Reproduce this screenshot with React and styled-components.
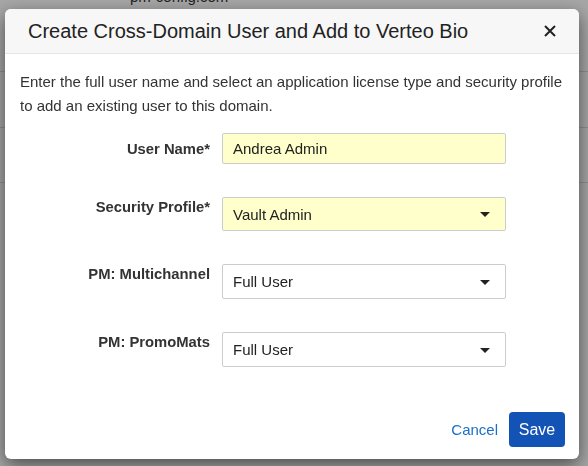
import React from "react";
import styled, { createGlobalStyle } from "styled-components";

const GlobalStyle = createGlobalStyle`
  html, body {
    margin: 0;
    padding: 0;
    width: 100%;
    height: 100%;
    overflow: hidden;
    font-family: "Liberation Sans", Arial, sans-serif;
    color: #333;
  }
`;

const Page = styled.div`
  background: #fff;
  width: 588px;
  height: 466px;
  overflow: hidden;
`;

const Domain = styled.div`
  padding-left: 130px;
  margin-top: -12px;
  font-size: 15px;
  line-height: 18px;
  color: #333;
`;

const PageRow = styled.div`
  height: ${(p) => p.$h}px;
  border-bottom: 1px solid #ddd;
  display: flex;
  align-items: center;
  margin-left: -14px;
  font-size: 15px;
  color: #333;
`;

const Overlay = styled.div`
  position: fixed;
  inset: 0;
  background: rgba(0, 0, 0, 0.35);
`;

const Modal = styled.div`
  position: fixed;
  top: 9px;
  left: 5px;
  width: 574px;
  height: 450px;
  background: #fff;
  border-radius: 6px;
  box-shadow: 0 6px 18px rgba(0, 0, 0, 0.55);
  display: flex;
  flex-direction: column;
  overflow: hidden;
`;

const Header = styled.div`
  height: 44px;
  flex-shrink: 0;
  display: flex;
  align-items: center;
  justify-content: space-between;
  padding: 0 22px 0 23px;
  background: #f7f7f7;
  border-bottom: 1px solid #e5e5e5;
`;

const Title = styled.h4`
  margin: 0;
  font-size: 20px;
  font-weight: normal;
  color: #222;
`;

const Close = styled.button`
  border: 0;
  background: none;
  padding: 0;
  width: 14px;
  height: 14px;
  display: flex;
  cursor: pointer;
`;

const Body = styled.div`
  padding: 16px 8px 0 15px;
  flex: 1;
`;

const Intro = styled.p`
  margin: 0;
  font-size: 15px;
  line-height: 24px;
  color: #333;
`;

const Form = styled.div`
  margin-top: 15px;
  display: flex;
  flex-direction: column;
  gap: 33px;
`;

const Row = styled.div`
  display: flex;
  align-items: flex-start;
  gap: 12px;
`;

const Label = styled.label`
  width: 190px;
  text-align: right;
  font-size: 14.8px;
  font-weight: bold;
  line-height: 20px;
  padding-top: ${(p) => p.$offset}px;
  color: #333;
`;

const Field = styled.div`
  position: relative;
  width: 284px;
  height: ${(p) => p.$h}px;
  box-sizing: border-box;
  border: 1px solid #ccc;
  border-radius: 2px;
  background: ${(p) => (p.$required ? "#ffffcc" : "#fff")};
  display: flex;
  align-items: center;
  padding: 0 10px;
  font-size: 15px;
  color: #222;
`;

const Caret = styled.span`
  position: absolute;
  right: 15px;
  top: 50%;
  margin-top: -2px;
  width: 0;
  height: 0;
  border-left: 5.5px solid transparent;
  border-right: 5.5px solid transparent;
  border-top: 5px solid #222;
`;

const Footer = styled.div`
  display: flex;
  justify-content: flex-end;
  align-items: center;
  gap: 11px;
  padding: 0 14px 12px 0;
`;

const CancelLink = styled.a`
  font-size: 15px;
  color: #1a6fc9;
  text-decoration: none;
`;

const SaveButton = styled.button`
  width: 56px;
  height: 35px;
  border: 0;
  border-radius: 4px;
  background: #1453b6;
  color: #fff;
  font-family: "Liberation Sans", Arial, sans-serif;
  font-size: 16px;
`;

const fields = [
  { label: "User Name*", value: "Andrea Admin", required: true, select: false, h: 31, offset: 6 },
  { label: "Security Profile*", value: "Vault Admin", required: true, select: true, h: 34, offset: 0 },
  { label: "PM: Multichannel", value: "Full User", required: false, select: true, h: 35, offset: 0 },
  { label: "PM: PromoMats", value: "Full User", required: false, select: true, h: 35, offset: 0 },
];

const App = () => {
  return (
    <>
      <GlobalStyle />
      <Page>
        <Domain>pm-config.com</Domain>
        <PageRow $h={65}>c</PageRow>
        <PageRow $h={55}>re</PageRow>
        <PageRow $h={54}>v</PageRow>
      </Page>
      <Overlay />
      <Modal>
        <Header>
          <Title>Create Cross-Domain User and Add to Verteo Bio</Title>
          <Close aria-label="Close">
            <svg width="14" height="14" viewBox="0 0 14 14">
              <path d="M2 2 L12 12 M12 2 L2 12" stroke="#222" strokeWidth="2" />
            </svg>
          </Close>
        </Header>
        <Body>
          <Intro>
            Enter the full user name and select an application license type and security profile
            to add an existing user to this domain.
          </Intro>
          <Form>
            {fields.map((f) => (
              <Row key={f.label}>
                <Label $offset={f.offset}>{f.label}</Label>
                <Field $required={f.required} $h={f.h}>
                  {f.value}
                  {f.select && <Caret />}
                </Field>
              </Row>
            ))}
          </Form>
        </Body>
        <Footer>
          <CancelLink href="#">Cancel</CancelLink>
          <SaveButton>Save</SaveButton>
        </Footer>
      </Modal>
    </>
  );
};

export default App;
